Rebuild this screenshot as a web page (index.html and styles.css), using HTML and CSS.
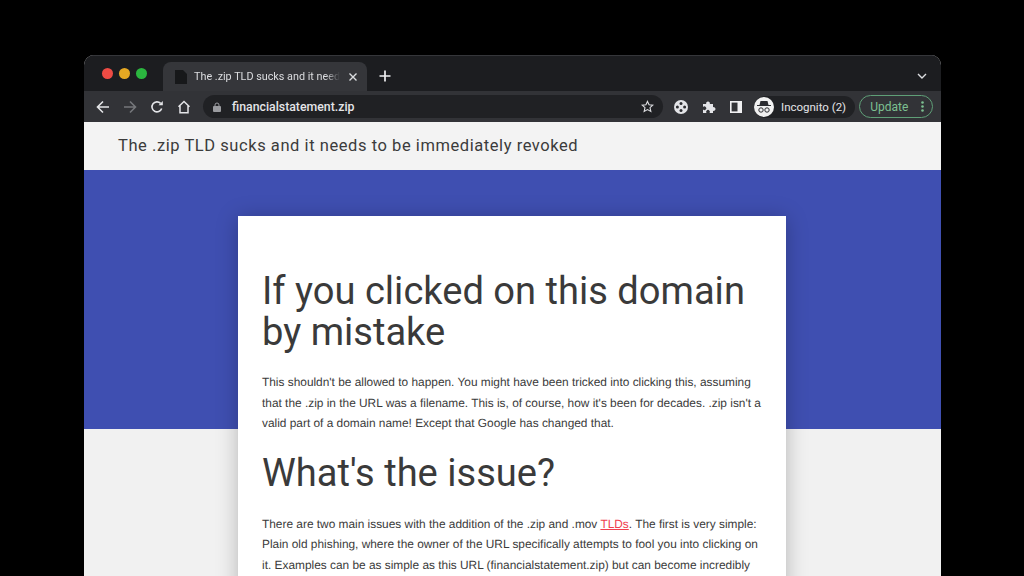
FILE: index.html
```html
<!DOCTYPE html>
<html lang="en">
<head>
    <meta charset="UTF-8">
    <meta name="viewport" content="width=device-width, initial-scale=1.0">
    <title>The .zip TLD sucks and it needs to be immediately revoked</title>
    <link rel="stylesheet" href="styles.css">
</head>
<body>
    <div class="window">
        <div class="tabstrip">
            <div class="traffic">
                <span class="dot red"></span>
                <span class="dot yellow"></span>
                <span class="dot green"></span>
            </div>
            <div class="tab">
                <svg class="favicon" width="16" height="16" viewBox="0 0 16 16"><path d="M2 1h8l4 4v10H2z" fill="#17181a"/></svg>
                <span class="tab-title">The .zip TLD sucks and it need</span>
                <svg class="tab-close" width="10" height="10" viewBox="0 0 10 10"><path d="M1.5 1.5l7 7M8.5 1.5l-7 7" stroke="#dcdde0" stroke-width="1.4" fill="none"/></svg>
            </div>
            <svg class="new-tab" width="12" height="12" viewBox="0 0 12 12"><path d="M6 .5v11M.5 6h11" stroke="#f0f0f2" stroke-width="1.7" fill="none"/></svg>
            <svg class="tab-menu" width="10" height="6" viewBox="0 0 10 6"><path d="M1 1l4 4 4-4" stroke="#dcdde0" stroke-width="1.4" fill="none"/></svg>
        </div>

        <div class="toolbar">
            <svg class="tool" width="14" height="14" viewBox="0 0 14 14"><path d="M13 7H2M7 1.500L1.500 7 7 12.500" stroke="#e4e5e8" stroke-width="1.600" fill="none"/></svg>
            <svg class="tool" width="14" height="14" viewBox="0 0 14 14"><path d="M1 7h11M7 1.500L12.500 7 7 12.500" stroke="#75777b" stroke-width="1.600" fill="none"/></svg>
            <svg class="tool" width="14" height="14" viewBox="0 0 14 14"><path d="M11.700 8.500A5 5 0 1 1 10.600 3.400" stroke="#e4e5e8" stroke-width="1.600" fill="none"/><path d="M8.500 5.200h4.300V.9z" fill="#e4e5e8"/></svg>
            <svg class="tool" width="14" height="14" viewBox="0 0 14 14"><path d="M1.500 6.800L7 1.500l5.500 5.300M3 5.500v7.200h8V5.500" stroke="#e4e5e8" stroke-width="1.500" fill="none"/></svg>
            <div class="omnibox">
                <svg width="8" height="10" viewBox="0 0 8 10"><path d="M2 4.500V3a2 2 0 0 1 4 0v1.500" stroke="#9a9b9f" fill="none"/><rect y="4" width="8" height="6" rx="1" fill="#9a9b9f"/></svg>
                <span class="url">financialstatement.zip</span>
                <svg class="star" width="13" height="13" viewBox="0 0 14 14"><path d="M7 1.500l1.700 3.700 4 .4-3 2.700.9 4L7 10.300l-3.600 2 .9-4-3-2.700 4-.4z" stroke="#dcdde0" stroke-width="1.200" fill="none"/></svg>
            </div>
            <div class="ext-group">
                <svg width="14" height="14" viewBox="0 0 14 14"><circle cx="7" cy="7" r="7" fill="#e4e5e8"/><g fill="#2b2c30"><circle cx="7" cy="3.400" r="1.500"/><circle cx="7" cy="10.600" r="1.500"/><circle cx="3.400" cy="7" r="1.500"/><circle cx="10.600" cy="7" r="1.500"/></g></svg>
                <svg width="14" height="14" viewBox="0 0 14 14"><path d="M1 4h3.200a1.900 1.900 0 1 1 3.600 0H11v3.200a1.900 1.900 0 1 1 0 3.600V13H7.500a1.900 1.900 0 1 0-3 0H1V9.500a1.900 1.900 0 1 0 0-2.500z" fill="#e4e5e8"/></svg>
                <svg width="12" height="12" viewBox="0 0 12 12"><rect x=".8" y=".8" width="10.400" height="10.400" fill="none" stroke="#f0f0f2" stroke-width="1.600"/><rect x="7.500" y="1" width="3.500" height="10" fill="#f0f0f2"/></svg>
            </div>
            <div class="profile">
                <span class="avatar">
                    <svg width="14" height="12" viewBox="0 0 14 12"><path d="M3.500 0h7l1 4H14v1H0V4h2.500z" fill="#2b2c30"/><circle cx="4" cy="9" r="2.200" fill="none" stroke="#2b2c30"/><circle cx="10" cy="9" r="2.200" fill="none" stroke="#2b2c30"/></svg>
                </span>
                <span class="profile-name">Incognito (2)</span>
            </div>
            <div class="update">
                <span>Update</span>
                <svg width="3" height="11" viewBox="0 0 3 11"><g fill="#7cc091"><circle cx="1.500" cy="1.500" r="1.300"/><circle cx="1.500" cy="5.500" r="1.300"/><circle cx="1.500" cy="9.500" r="1.300"/></g></svg>
            </div>
        </div>

        <header class="site-header">The .zip TLD sucks and it needs to be immediately revoked</header>

        <main class="site-main">
            <article class="card">
                <h1>If you clicked on this domain by mistake</h1>
                <p>This shouldn't be allowed to happen. You might have been tricked into clicking this, assuming that the .zip in the URL was a filename. This is, of course, how it's been for decades. .zip isn't a valid part of a domain name! Except that Google has changed that.</p>
                <h2>What's the issue?</h2>
                <p class="issue">There are two main issues with the addition of the .zip and .mov <a href="#">TLDs</a>. The first is very simple: Plain old phishing, where the owner of the URL specifically attempts to fool you into clicking on it. Examples can be as simple as this URL (financialstatement.zip) but can become incredibly</p>
            </article>
        </main>
    </div>
</body>
</html>
```

FILE: styles.css
```css
html, body {
    height: 100%;
}
body {
    margin: 0;
    background-color: #000;
    overflow: hidden;
    font-family: Roboto, sans-serif;
}
.window {
    width: 857px;
    height: 521px;
    margin: 55px 0 0 84px;
    border-radius: 10px 10px 0 0;
    overflow: hidden;
    background-color: #f1f1f1;
}

/* browser chrome */
.tabstrip {
    height: 36px;
    background-color: #1c1d20;
    box-shadow: inset 0 1px 0 #35363a;
    display: flex;
    align-items: flex-end;
}
.traffic {
    display: flex;
    gap: 6px;
    align-self: flex-start;
    margin: 13px 0 0 18px;
    width: 61px;
}
.dot {
    width: 11px;
    height: 11px;
    border-radius: 50%;
}
.red { background-color: #ee4b44; }
.yellow { background-color: #e5a823; }
.green { background-color: #2bb63f; }
.tab {
    width: 204px;
    height: 29px;
    box-sizing: border-box;
    padding: 0 9px 0 10px;
    background-color: #35363a;
    border-radius: 8px 8px 0 0;
    display: flex;
    align-items: center;
    gap: 5px;
}
.favicon {
    flex: none;
}
.tab-title {
    white-space: nowrap;
    font-size: 10.800px;
    color: #dcdde0;
    -webkit-mask-image: linear-gradient(to right, #000 90%, transparent);
    mask-image: linear-gradient(to right, #000 90%, transparent);
}
.tab-close {
    margin-left: auto;
    flex: none;
}
.new-tab {
    margin: 0 0 9px 12px;
}
.tab-menu {
    margin: 0 14px 12px auto;
}
.toolbar {
    height: 31px;
    background-color: #323337;
    display: flex;
    align-items: center;
    padding-left: 12px;
    color: #e4e5e8;
}
.tool {
    margin-right: 13px;
    flex: none;
}
.omnibox {
    width: 460px;
    height: 23px;
    box-sizing: border-box;
    margin-left: -1px;
    padding: 0 9px 0 10px;
    background-color: #202124;
    border-radius: 12px;
    display: flex;
    align-items: center;
    gap: 11px;
}
.url {
    font-size: 12.300px;
    font-weight: 500;
    color: #e4e5e8;
}
.star {
    margin-left: auto;
}
.ext-group {
    display: flex;
    align-items: center;
    gap: 14px;
    margin-left: 11px;
}
.profile {
    display: flex;
    align-items: center;
    gap: 7px;
    height: 22px;
    margin-left: 12px;
    padding-right: 9px;
    background-color: #202124;
    border-radius: 11px;
}
.avatar {
    width: 20px;
    height: 20px;
    border-radius: 50%;
    background-color: #f1f1f1;
    display: flex;
    align-items: center;
    justify-content: center;
}
.profile-name {
    font-size: 11.500px;
    color: #e4e5e8;
}
.update {
    width: 74px;
    height: 23px;
    box-sizing: border-box;
    margin-left: 4px;
    padding: 0 8px 0 10px;
    border: 1px solid #5f9f77;
    border-radius: 12px;
    display: flex;
    align-items: center;
    justify-content: space-between;
    font-size: 12px;
    color: #7cc091;
}

/* page content */
.site-header {
    height: 48px;
    box-sizing: border-box;
    padding: 14px 0 0 34px;
    background-color: #f3f3f3;
    font-size: 16.500px;
    line-height: 20px;
    letter-spacing: .56px;
    color: #3b3b3b;
}
.site-main {
    padding-top: 46px;
    background: linear-gradient(#3f4fb1 259px, #f1f1f1 259px);
}
.card {
    width: 548px;
    min-height: 400px;
    box-sizing: border-box;
    margin-left: 154px;
    padding: 55px 24px 0;
    background-color: #fff;
    box-shadow: 0 2px 20px rgba(0,0,0,0.25);
}
h1, h2 {
    margin: 0;
    font-weight: 400;
    color: #3a3a3a;
}
h1 {
    font-size: 38.100px;
    line-height: 41px;
}
h2 {
    font-size: 38.100px;
    line-height: 41px;
    margin-top: 19px;
}
p {
    margin: 19px 0 0;
    font-family: "Liberation Sans", Arial, sans-serif;
    font-size: 11.880px;
    line-height: 20.500px;
    color: #3a3a3a;
    text-rendering: geometricPrecision;
}
.issue {
    margin-top: 20px;
}
.card a {
    color: #f0414f;
}
```
